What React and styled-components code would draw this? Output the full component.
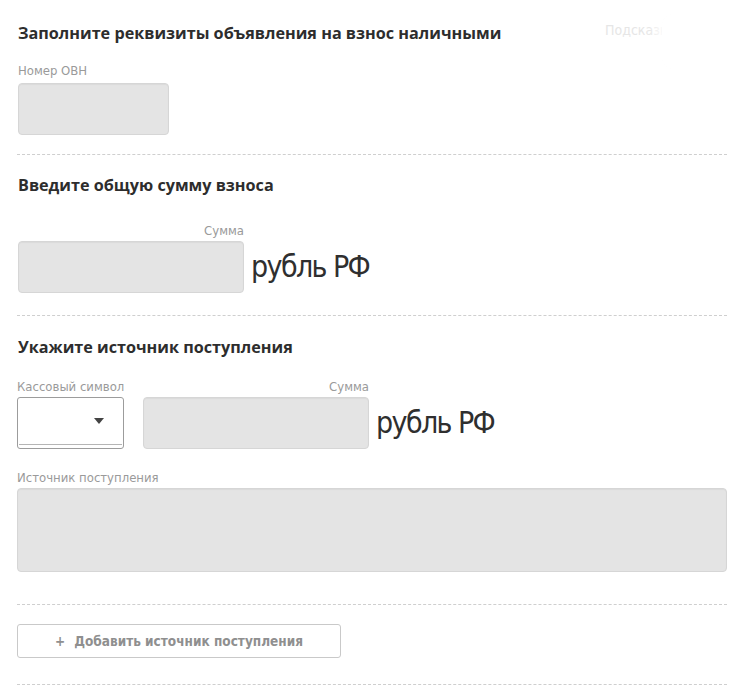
import React from 'react';
import styled, { createGlobalStyle } from 'styled-components';

const GlobalStyle = createGlobalStyle`
  html, body {
    margin: 0;
    padding: 0;
    background: #fff;
  }
  body {
    font-family: "Open Sans", "Liberation Sans", sans-serif;
    color: #333;
  }
`;

const narrow = `"Liberation Sans Narrow", "DejaVu Sans Condensed", sans-serif`;

const Page = styled.div`
  position: relative;
  width: 749px;
  height: 687px;
  overflow: hidden;
  padding: 0 22px 0 17px;
  box-sizing: border-box;
`;

const Section = styled.section`
  padding: ${p => p.$pad || '20px 0 20px'};
  border-bottom: 1px dashed #cfcfcf;
`;

const Heading = styled.h2`
  margin: 0 0 0 1px;
  font-size: 16.2px;
  font-weight: 700;
  line-height: 22px;
  color: #2d2d2d;
`;

const Hint = styled.div`
  position: absolute;
  top: 22px;
  left: 605px;
  font-family: ${narrow};
  font-size: 14px;
  color: #e6e6e6;
  white-space: nowrap;
`;

const HintFade = styled.div`
  position: absolute;
  top: 14px;
  left: 662px;
  width: 100px;
  height: 55px;
  border-radius: 12px;
  background: #fff;
  box-shadow: 0 0 12px 6px rgba(255, 255, 255, 0.9), 0 0 2px rgba(0, 0, 0, 0.03);
`;

const Label = styled.div`
  font-family: ${narrow};
  font-size: 13px;
  line-height: 16px;
  color: #9a9a9a;
  white-space: nowrap;
  text-align: ${p => (p.$right ? 'right' : 'left')};
`;

const Field = styled.div`
  display: flex;
  flex-direction: column;
  gap: ${p => p.$gap || '4px'};
  margin-top: ${p => p.$top || '0'};
  margin-left: ${p => p.$indent || '0'};
  width: ${p => p.$width || 'auto'};
`;

const Input = styled.div`
  width: ${p => p.$width || '150px'};
  height: ${p => p.$height || '51px'};
  box-sizing: border-box;
  background: #e4e4e4;
  border: 1px solid #d6d6d6;
  border-radius: 4px;
  box-shadow: inset 0 1px 1px rgba(0, 0, 0, 0.04);
`;

const Row = styled.div`
  display: flex;
  align-items: flex-end;
  gap: ${p => p.$gap || '7px'};
  margin-top: ${p => p.$top || '0'};
  margin-left: ${p => p.$indent || '0'};
`;

const Currency = styled.span`
  font-family: ${narrow};
  font-size: 30px;
  line-height: 52px;
  color: #2f2f2f;
  letter-spacing: -1.6px;
  white-space: nowrap;
`;

const Select = styled.div`
  position: relative;
  width: 107px;
  height: 52px;
  box-sizing: border-box;
  background: #fff;
  border: 1px solid #9c9c9c;
  border-radius: 3px;
  &::after {
    content: '';
    position: absolute;
    left: 1px;
    right: 1px;
    bottom: 3px;
    border-bottom: 1px solid #b5b5b5;
  }
`;

const Caret = styled.span`
  position: absolute;
  top: 20px;
  left: 76px;
  width: 0;
  height: 0;
  border-left: 5px solid transparent;
  border-right: 5px solid transparent;
  border-top: 6px solid #444;
`;

const AddButton = styled.button`
  width: 324px;
  height: 34px;
  background: #fff;
  border: 1px solid #c9c9c9;
  border-radius: 3px;
  font-family: ${narrow};
  font-size: 13.5px;
  font-weight: 700;
  color: #8f8f8f;
  cursor: pointer;
  display: flex;
  align-items: center;
  justify-content: center;
  gap: 9px;
`;

export default function App() {
  return (
    <>
      <GlobalStyle />
      <Page>
        <Hint>Подсказка</Hint>
        <HintFade />

        <Section $pad="22px 0 19px">
          <Heading>Заполните реквизиты объявления на взнос наличными</Heading>
          <Field $top="19px" $gap="4px" $indent="1px">
            <Label>Номер ОВН</Label>
            <Input $width="151px" $height="52px" />
          </Field>
        </Section>

        <Section $pad="19px 0 22px">
          <Heading>Введите общую сумму взноса</Heading>
          <Row $top="27px" $indent="1px">
            <Field $width="226px" $gap="2px">
              <Label $right>Сумма</Label>
              <Input $width="226px" $height="52px" />
            </Field>
            <Currency>рубль РФ</Currency>
          </Row>
        </Section>

        <Section $pad="20px 0 32px">
          <Heading>Укажите источник поступления</Heading>
          <Row $top="21px" $gap="19px">
            <Field $width="107px" $gap="2px">
              <Label>Кассовый символ</Label>
              <Select>
                <Caret />
              </Select>
            </Field>
            <Row>
              <Field $width="226px" $gap="2px">
                <Label $right>Сумма</Label>
                <Input $width="226px" $height="52px" />
              </Field>
              <Currency>рубль РФ</Currency>
            </Row>
          </Row>
          <Field $top="21px" $gap="2px">
            <Label>Источник поступления</Label>
            <Input $width="710px" $height="84px" />
          </Field>
        </Section>

        <Section $pad="19px 0 26px">
          <AddButton>
            <span>+</span>
            <span>Добавить источник поступления</span>
          </AddButton>
        </Section>
      </Page>
    </>
  );
}
